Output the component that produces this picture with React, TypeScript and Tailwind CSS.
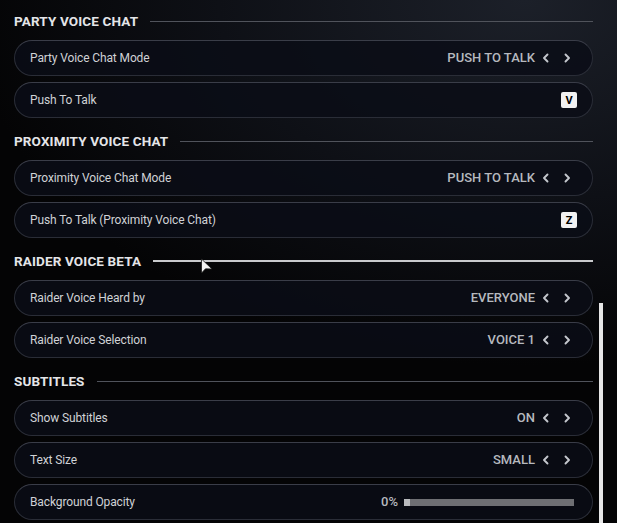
import type { ReactNode } from "react";

type Row =
  | { label: string; kind: "choice"; value: string }
  | { label: string; kind: "key"; value: string }
  | { label: string; kind: "slider"; value: number };

type Section = { title: string; active?: boolean; rows: Row[] };

const sections: Section[] = [
  {
    title: "Party Voice Chat",
    rows: [
      { label: "Party Voice Chat Mode", kind: "choice", value: "Push To Talk" },
      { label: "Push To Talk", kind: "key", value: "V" },
    ],
  },
  {
    title: "Proximity Voice Chat",
    rows: [
      { label: "Proximity Voice Chat Mode", kind: "choice", value: "Push To Talk" },
      { label: "Push To Talk (Proximity Voice Chat)", kind: "key", value: "Z" },
    ],
  },
  {
    title: "Raider Voice Beta",
    active: true,
    rows: [
      { label: "Raider Voice Heard by", kind: "choice", value: "Everyone" },
      { label: "Raider Voice Selection", kind: "choice", value: "Voice 1" },
    ],
  },
  {
    title: "Subtitles",
    rows: [
      { label: "Show Subtitles", kind: "choice", value: "On" },
      { label: "Text Size", kind: "choice", value: "Small" },
      { label: "Background Opacity", kind: "slider", value: 0 },
    ],
  },
];

function Chevron({ dir }: { dir: "left" | "right" }) {
  return (
    <svg width="8" height="10" viewBox="0 0 8 10" fill="none" className="text-[#c4c7cd]">
      <path
        d={dir === "left" ? "M5.5 1.5 2 5l3.5 3.5" : "M2.5 1.5 6 5 2.5 8.5"}
        stroke="currentColor"
        strokeWidth="1.9"
        strokeLinecap="round"
        strokeLinejoin="round"
      />
    </svg>
  );
}

function Control({ row }: { row: Row }) {
  if (row.kind === "choice") {
    return (
      <div className="flex items-center pr-[21px]">
        <span className="text-[13px] font-medium uppercase text-[#b6b9bf]">{row.value}</span>
        <span className="ml-[7px] flex items-center gap-[13px]">
          <Chevron dir="left" />
          <Chevron dir="right" />
        </span>
      </div>
    );
  }
  if (row.kind === "key") {
    return (
      <div className="pr-[15px]">
        <span className="flex h-4 w-4 items-center justify-center rounded-[2px] bg-[#f2f2f2] text-[11px] font-bold leading-none text-black">
          {row.value}
        </span>
      </div>
    );
  }
  return (
    <div className="flex items-center gap-[6px] pr-[18px]">
      <span className="text-[13px] font-medium text-[#b6b9bf]">{row.value}%</span>
      <div className="flex h-[7px] w-[170px] bg-[#6e6f73]">
        <div className="w-[6px] bg-[#b9babd]" />
      </div>
    </div>
  );
}

function SettingRow({ row }: { row: Row }) {
  return (
    <div className="flex h-9 items-center justify-between rounded-full border border-[#2a2d37] border-t-[#3a3d48] bg-[#0b0d16]/85">
      <span className="pl-[15px] text-[12px] tracking-[-0.01em] text-[#d0d2d6]">{row.label}</span>
      <Control row={row} />
    </div>
  );
}

function Header({ title, active }: { title: string; active?: boolean }): ReactNode {
  return (
    <div className="mb-[9px] flex h-5 items-center">
      <span className="text-[13.5px] font-bold uppercase tracking-[0.01em] text-[#e4e5e8]">
        {title}
      </span>
      <div className={active ? "ml-3 h-[2px] flex-1 bg-[#c9cacd]" : "ml-3 h-px flex-1 bg-[#50535b]"} />
    </div>
  );
}

export default function App() {
  return (
    <div
      className="relative h-[523px] w-[617px] overflow-hidden bg-[radial-gradient(ellipse_90%_70%_at_85%_0%,#1c2029_0%,#0e1016_55%,#040405_100%)] pl-[14px] pr-[24px] pt-[11px]"
      style={{ fontFamily: "Roboto, 'Noto Sans', sans-serif" }}
    >
      <div className="flex flex-col gap-[13px]">
        {sections.map((s) => (
          <section key={s.title}>
            <Header title={s.title} active={s.active} />
            <div className="flex flex-col gap-[6px]">
              {s.rows.map((r) => (
                <SettingRow key={r.label} row={r} />
              ))}
            </div>
          </section>
        ))}
      </div>

      {/* scrollbar thumb */}
      <div className="absolute right-[14px] top-[303px] h-[230px] w-1 bg-[#e6e6e6]" />

      {/* mouse cursor */}
      <svg className="absolute left-[200px] top-[258px]" width="14" height="17" viewBox="0 0 14 17">
        <path d="M1.5 1v14l4-4.2 6.5.2z" fill="#f4f4f4" stroke="#1a1a1a" strokeWidth="0.8" strokeLinejoin="round" />
      </svg>
    </div>
  );
}
